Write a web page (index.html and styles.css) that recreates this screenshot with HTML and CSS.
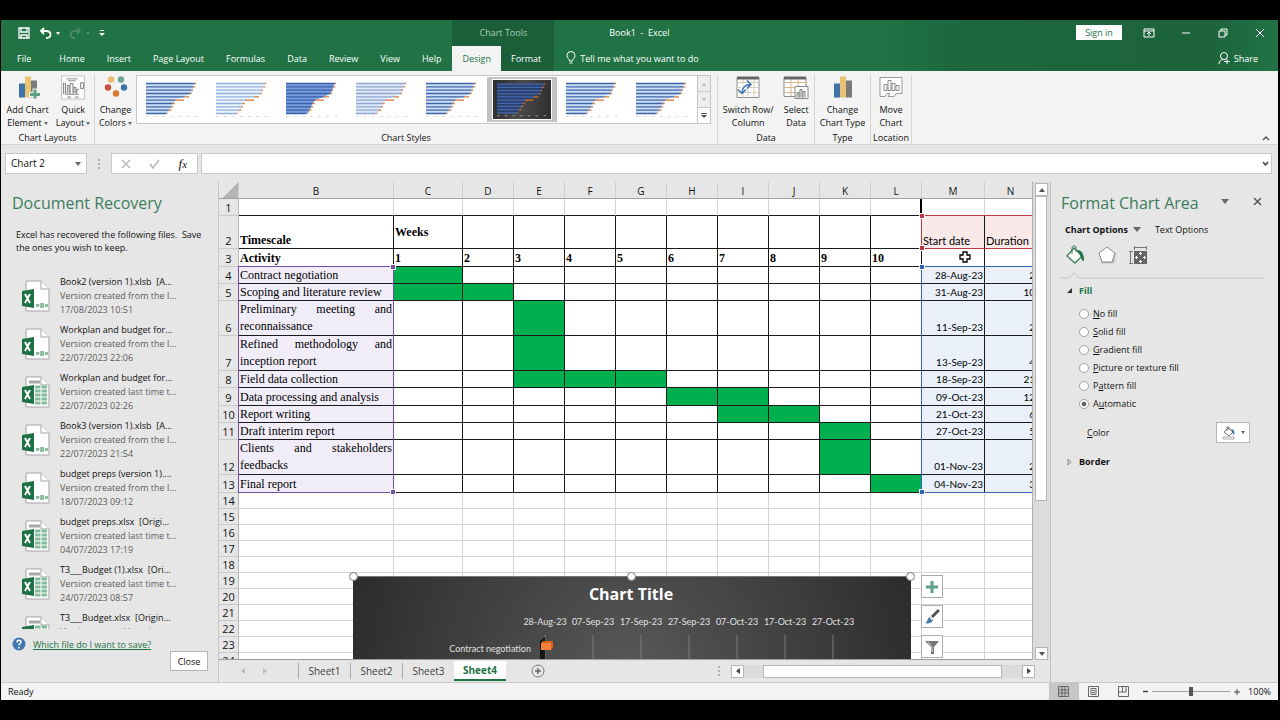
FILE: index.html
```html
<!DOCTYPE html>
<html lang="en">
<head>
    <meta charset="UTF-8">
    <title>Book1 - Excel</title>
    <link rel="stylesheet" href="styles.css">
</head>
<body>
<svg class="defs" aria-hidden="true">
    <symbol id="bars" viewBox="0 0 156 110">
        <path class="gaps" d="M0 6H146L136 36 115 46 90 56 80 66 67 96H0z"/>
        <path class="blue" d="M0 7H146M0 17H142M0 27H136M0 37H132M0 47H115M0 57H87M0 67H80M0 77H75M0 87H67M0 97H61"/>
        <path class="orange" d="M146 7h4M142 17h6M136 27h5M132 37h5M115 47h14M87 57h27M80 67h6M75 77h6M67 87h9M61 97h3"/>
        <path class="axis" d="M0 106h8M24 106h8M48 106h8M72 106h8M96 106h8M120 106h8M146 106h8"/>
    </symbol>
    <symbol id="file-auto" viewBox="0 0 28 32">
        <path d="M4 1h15l8 8v22H4z" fill="#fff" stroke="#a3a3a3"/>
        <path d="M19 1v8h8" fill="#fff" stroke="#a3a3a3"/>
        <path d="M14 25h12" stroke="#9ccab1"/>
        <path d="M14 24h3v3h-3zM18 23h4v5h-4zM23 24h3v3h-3z" fill="#8fc0a5"/>
        <path d="M0 11l12-2v19L0 26z" fill="#1e7145"/>
        <path d="M3 14l5 9M8 14l-5 9" stroke="#fff" stroke-width="2"/>
    </symbol>
    <symbol id="file-sheet" viewBox="0 0 28 32">
        <path d="M4 1h15l8 8v22H4z" fill="#fff" stroke="#a3a3a3"/>
        <path d="M7 6h11" stroke="#a6a6a6" stroke-width="3"/>
        <path d="M13 11h12M13 15h12M13 19h12M13 23h12M13 27h12" stroke="#84bb9c" stroke-width="3"/>
        <path d="M19 9v20" stroke="#fff"/>
        <path d="M19 1v8h8" fill="#fff" stroke="#a3a3a3"/>
        <path d="M0 11l12-2v19L0 26z" fill="#1e7145"/>
        <path d="M3 14l5 9M8 14l-5 9" stroke="#fff" stroke-width="2"/>
    </symbol>
    <symbol id="chart-bars" viewBox="0 0 24 24">
        <path d="M3 8h6v14H3z" fill="#3f74a8"/>
        <path d="M9 1h6v21H9z" fill="#e9c274"/>
        <path d="M15 5h6v17h-6z" fill="#7a7a7a"/>
    </symbol>
</svg>

<div class="window">
    <header class="titlebar">
        <div class="tabs-block">
            <div class="quick-access">
                <button aria-label="Save"><svg width="12" height="12" viewBox="0 0 12 12"><path d="M1 1h10v10H1zM3 1v4h6V1M3 11V8h6v3" fill="none" stroke="#fff" stroke-width="1.3"/></svg></button>
                <button aria-label="Undo"><svg width="21" height="12" viewBox="0 0 21 12"><path d="M5 1L2 4l3 3M2 4h5c6 0 6 7 0 7" fill="none" stroke="#fff" stroke-width="1.8"/><path d="M17 5h4l-2 3z" fill="#fff"/></svg></button>
                <button aria-label="Redo" disabled><svg width="21" height="12" viewBox="0 0 21 12"><path d="M8 1l3 3-3 3M11 4H6c-6 0-6 7 0 7" fill="none" stroke="#4f9068" stroke-width="1.5"/><path d="M17 5h4l-2 3z" fill="#4f9068"/></svg></button>
                <button aria-label="Customize toolbar"><svg width="6" height="8" viewBox="0 0 6 8"><path d="M1 1.5h4" stroke="#fff"/><path d="M0 4h6L3 7z" fill="#fff"/></svg></button>
            </div>
            <nav class="tabs">
                <button class="file">File</button>
                <button>Home</button>
                <button>Insert</button>
                <button>Page Layout</button>
                <button>Formulas</button>
                <button>Data</button>
                <button>Review</button>
                <button>View</button>
                <button>Help</button>
            </nav>
        </div>
        <div class="context-block">
            <div class="context-title">Chart Tools</div>
            <nav class="tabs">
                <button class="active">Design</button>
                <button>Format</button>
            </nav>
        </div>
        <div class="title-block">
            <div class="title-row">
                <span class="book-name">Book1&nbsp; -&nbsp; Excel</span>
                <button class="sign-in">Sign in</button>
                <div class="window-buttons">
                    <button aria-label="Ribbon display options"><svg width="12" height="10" viewBox="0 0 12 10"><path d="M1 1h10v8H1zM1 3h10M6 8V4M4 6l2-2 2 2" fill="none" stroke="#fff"/></svg></button>
                    <button aria-label="Minimize"><svg width="10" height="10" viewBox="0 0 10 10"><path d="M1 5h8" stroke="#fff"/></svg></button>
                    <button aria-label="Restore"><svg width="10" height="10" viewBox="0 0 10 10"><path d="M1 3h6v6H1zM3 3V1h6v6H7" fill="none" stroke="#fff"/></svg></button>
                    <button aria-label="Close window"><svg width="10" height="10" viewBox="0 0 10 10"><path d="M1 1l8 8M9 1L1 9" stroke="#fff"/></svg></button>
                </div>
            </div>
            <div class="tell-row">
                <button class="tell-me"><svg width="10" height="14" viewBox="0 0 10 14"><path d="M3.500 10C3.500 8 1 7 1 4.500a4 4 0 0 1 8 0C9 7 6.500 8 6.500 10zM3.500 12h3" fill="none" stroke="#fff"/></svg>Tell me what you want to do</button>
                <button class="share"><svg width="12" height="12" viewBox="0 0 12 12"><circle cx="6" cy="4" r="3.500" fill="none" stroke="#fff"/><path d="M1 12c0-3 2-4 4-4.500M6 9.500h6M9 7v5" fill="none" stroke="#fff"/></svg>Share</button>
            </div>
        </div>
    </header>

    <section class="ribbon">
        <div class="group layouts">
            <div class="group-items">
                <button class="tool"><svg width="24" height="24" viewBox="0 0 24 24"><use href="#chart-bars"/><path d="M19 13v11M13 19h11" stroke="#f3f3f3" stroke-width="5"/><path d="M19 14v9M14 19h10" stroke="#5fa285" stroke-width="3"/></svg><span>Add Chart<br>Element <i class="caret"></i></span></button>
                <button class="tool"><svg width="26" height="26" viewBox="0 0 26 26"><path d="M1 1h24v24H1z" fill="#fff" stroke="#c0c0c0"/><path d="M6 4h12M8 6h8" stroke="#8a8a8a"/><path d="M3 8v12M5 8v12h14M7 19v-8h2v8M10 19V9h3v10M14 19v-6h2v6M17 19v-4h2M21 8h3v6h-3zM7 23h4M15 23h4" fill="none" stroke="#777"/></svg><span>Quick<br>Layout <i class="caret"></i></span></button>
            </div>
            <div class="group-name">Chart Layouts</div>
        </div>
        <div class="group styles">
            <div class="group-items">
                <button class="tool"><svg width="24" height="24" viewBox="0 0 24 24"><circle cx="7" cy="4" r="3.200" fill="#e9b96e"/><circle cx="17" cy="4" r="3.200" fill="#6aa58c"/><circle cx="4" cy="12" r="3.200" fill="#c8503c"/><circle cx="20" cy="12" r="3.200" fill="#3f74a8"/><circle cx="12" cy="18" r="3.200" fill="#d9792b"/></svg><span>Change<br>Colors <i class="caret"></i></span></button>
                <div class="gallery">
                    <button class="thumb" aria-label="Style 1"><svg><use href="#bars"/></svg></button>
                    <button class="thumb striped" aria-label="Style 2"><svg><use href="#bars"/></svg></button>
                    <button class="thumb thick" aria-label="Style 3"><svg><use href="#bars"/></svg></button>
                    <button class="thumb pale" aria-label="Style 4"><svg><use href="#bars"/></svg></button>
                    <button class="thumb" aria-label="Style 5"><svg><use href="#bars"/></svg></button>
                    <button class="thumb selected" aria-label="Style 6"><svg><use href="#bars"/></svg></button>
                    <button class="thumb" aria-label="Style 7"><svg><use href="#bars"/></svg></button>
                    <button class="thumb" aria-label="Style 8"><svg><use href="#bars"/></svg></button>
                    <div class="gallery-nav">
                        <button aria-label="Previous styles"><svg width="6" height="4"><path d="M1 4h4L3 1z" fill="#bbb"/></svg></button>
                        <button aria-label="Next styles"><svg width="6" height="4"><path d="M1 0h4L3 3z" fill="#bbb"/></svg></button>
                        <button class="more" aria-label="More styles"><svg width="6" height="6"><path d="M0 .5h6" stroke="#555"/><path d="M0 2h6L3 5z" fill="#555"/></svg></button>
                    </div>
                </div>
            </div>
            <div class="group-name">Chart Styles</div>
        </div>
        <div class="group data">
            <div class="group-items">
                <button class="tool"><svg width="24" height="24" viewBox="0 0 24 24"><path d="M1 2h22v20H1z" fill="#fff" stroke="#8c8c8c"/><path d="M1 7h22M1 12h22M1 17h22M7 3v19M12 3v19M18 3v19" stroke="#d6cbb5"/><path d="M1 1h22v3H1z" fill="#666"/><path d="M6 17c0-5 3-8 9-8" stroke="#fff" stroke-width="4" fill="none"/><path d="M6 18c0-6 3-9 9-9M11 5l4 4-4 4M2 14l4 4 4-4" stroke="#3f74b5" stroke-width="1.5" fill="none"/></svg><span>Switch Row/<br>Column</span></button>
                <button class="tool"><svg width="26" height="24" viewBox="0 0 26 24"><path d="M1 2h22v19H1z" fill="#fff" stroke="#8c8c8c"/><path d="M1 7h22M1 12h22M1 17h22M8 3v18M15 3v18" stroke="#d9b48a"/><path d="M1 1h22v3H1z" fill="#666"/><path d="M12 11h13v12H12z" fill="#fff" stroke="#888"/><path d="M14 22v-5h2v5M17 22v-8h2v8M20 22v-6h2v6" fill="none" stroke="#777"/></svg><span>Select<br>Data</span></button>
            </div>
            <div class="group-name">Data</div>
        </div>
        <div class="group type">
            <div class="group-items">
                <button class="tool"><svg width="24" height="24"><use href="#chart-bars"/></svg><span>Change<br>Chart Type</span></button>
            </div>
            <div class="group-name">Type</div>
        </div>
        <div class="group location">
            <div class="group-items">
                <button class="tool"><svg width="24" height="24" viewBox="0 0 24 24"><path d="M1 2h22v16h-6l-2 3H9l2-3H8l-2 3H1z" fill="#fff" stroke="#999"/><path d="M5 15V9h3v6zM9 15V5h3v10zM13 15V8h3v7zM17 15v-5h3v5z" fill="none" stroke="#888"/></svg><span>Move<br>Chart</span></button>
            </div>
            <div class="group-name">Location</div>
        </div>
        <button class="collapse" aria-label="Collapse the ribbon"><svg width="8" height="6" viewBox="0 0 8 6"><path d="M1 5l3-3 3 3" fill="none" stroke="#555" stroke-width="1.5"/></svg></button>
    </section>

    <section class="formula-bar">
        <div class="name-box">
            <input type="text" value="Chart 2" aria-label="Name box">
            <button aria-label="Show names"><i class="caret"></i></button>
        </div>
        <span class="grip"></span>
        <div class="entry-buttons">
            <button aria-label="Cancel"><svg width="10" height="10" viewBox="0 0 10 10"><path d="M1 1l8 8M9 1L1 9" stroke="#b5b5b5" stroke-width="1.3"/></svg></button>
            <button aria-label="Enter"><svg width="11" height="10" viewBox="0 0 11 10"><path d="M1 5l3 4 6-8" fill="none" stroke="#b5b5b5" stroke-width="1.5"/></svg></button>
            <button class="fx" aria-label="Insert function">f<small>x</small></button>
        </div>
        <div class="formula">
            <input type="text" aria-label="Formula">
            <button aria-label="Expand formula bar"><svg width="7" height="5" viewBox="0 0 7 5"><path d="M1 1l2.500 3L6 1" fill="none" stroke="#444" stroke-width="1.5"/></svg></button>
        </div>
    </section>

    <main class="workspace">
        <aside class="recovery">
            <h2>Document Recovery</h2>
            <p>Excel has recovered the following files.&nbsp; Save the ones you wish to keep.</p>
            <ul class="files">
                <li><svg><use href="#file-auto"/></svg><div><b>Book2 (version 1).xlsb&nbsp; [A...</b><span>Version created from the l...</span><span>17/08/2023 10:51</span></div></li>
                <li><svg><use href="#file-auto"/></svg><div><b>Workplan and budget for...</b><span>Version created from the l...</span><span>22/07/2023 22:06</span></div></li>
                <li><svg><use href="#file-sheet"/></svg><div><b>Workplan and budget for...</b><span>Version created last time t...</span><span>22/07/2023 02:26</span></div></li>
                <li><svg><use href="#file-auto"/></svg><div><b>Book3 (version 1).xlsb&nbsp; [A...</b><span>Version created from the l...</span><span>22/07/2023 21:54</span></div></li>
                <li><svg><use href="#file-auto"/></svg><div><b>budget preps (version 1)....</b><span>Version created from the l...</span><span>18/07/2023 09:12</span></div></li>
                <li><svg><use href="#file-sheet"/></svg><div><b>budget preps.xlsx&nbsp; [Origi...</b><span>Version created last time t...</span><span>04/07/2023 17:19</span></div></li>
                <li><svg><use href="#file-sheet"/></svg><div><b>T3___Budget (1).xlsx&nbsp; [Ori...</b><span>Version created last time t...</span><span>24/07/2023 08:57</span></div></li>
                <li><svg><use href="#file-sheet"/></svg><div><b>T3___Budget.xlsx&nbsp; [Origin...</b><span>Version created last time t...</span></div></li>
            </ul>
            <div class="help-line">
                <svg width="14" height="14" viewBox="0 0 14 14"><circle cx="7" cy="7" r="6.500" fill="#3f74b0"/><path d="M5 5.500c0-3 4-3 4-.5C9 6.500 7 6.500 7 8.500M7 10v1.500" fill="none" stroke="#fff" stroke-width="1.5"/></svg>
                <a href="#">Which file do I want to save?</a>
            </div>
            <button class="close-pane">Close</button>
        </aside>

        <section class="book">
            <div class="sheet-row">
                <div class="sheet">
                    <table>
                        <colgroup>
                            <col class="c-num"><col class="c-act"><col class="c-first"><col class="c-week"><col class="c-week"><col class="c-week"><col class="c-week"><col class="c-week"><col class="c-week"><col class="c-week"><col class="c-week"><col class="c-week"><col class="c-date"><col class="c-dur">
                        </colgroup>
                        <thead>
                            <tr><th class="corner"></th><th>B</th><th>C</th><th>D</th><th>E</th><th>F</th><th>G</th><th>H</th><th>I</th><th>J</th><th>K</th><th>L</th><th>M</th><th>N</th></tr>
                        </thead>
                        <tbody class="plan">
                            <tr class="first"><th>1</th><td></td><td></td><td></td><td></td><td></td><td></td><td></td><td></td><td></td><td></td><td class="edge"></td><td></td><td></td></tr>
                            <tr class="scale"><th>2</th><td class="strong">Timescale</td><td class="strong weeks">Weeks</td><td></td><td></td><td></td><td></td><td></td><td></td><td></td><td></td><td></td><td class="head">Start date</td><td class="head">Duration</td></tr>
                            <tr class="odd strong"><th>3</th><td>Activity</td><td>1</td><td>2</td><td>3</td><td>4</td><td>5</td><td>6</td><td>7</td><td>8</td><td>9</td><td>10</td><td></td><td></td></tr>
                            <tr><th>4</th><td class="act">Contract negotiation</td><td class="on"></td><td></td><td></td><td></td><td></td><td></td><td></td><td></td><td></td><td></td><td class="val">28-Aug-23</td><td class="val">2</td></tr>
                            <tr><th>5</th><td class="act">Scoping and literature review</td><td class="on"></td><td class="on"></td><td></td><td></td><td></td><td></td><td></td><td></td><td></td><td></td><td class="val">31-Aug-23</td><td class="val">10</td></tr>
                            <tr class="tall"><th>6</th><td class="act">Preliminary meeting and reconnaissance</td><td></td><td></td><td class="on"></td><td></td><td></td><td></td><td></td><td></td><td></td><td></td><td class="val">11-Sep-23</td><td class="val">2</td></tr>
                            <tr class="tall"><th>7</th><td class="act">Refined methodology and inception report</td><td></td><td></td><td class="on"></td><td></td><td></td><td></td><td></td><td></td><td></td><td></td><td class="val">13-Sep-23</td><td class="val">4</td></tr>
                            <tr><th>8</th><td class="act">Field data collection</td><td></td><td></td><td class="on"></td><td class="on"></td><td class="on"></td><td></td><td></td><td></td><td></td><td></td><td class="val">18-Sep-23</td><td class="val">21</td></tr>
                            <tr class="odd"><th>9</th><td class="act">Data processing and analysis</td><td></td><td></td><td></td><td></td><td></td><td class="on"></td><td class="on"></td><td></td><td></td><td></td><td class="val">09-Oct-23</td><td class="val">12</td></tr>
                            <tr><th>10</th><td class="act">Report writing</td><td></td><td></td><td></td><td></td><td></td><td></td><td class="on"></td><td class="on"></td><td></td><td></td><td class="val">21-Oct-23</td><td class="val">6</td></tr>
                            <tr><th>11</th><td class="act">Draft interim report</td><td></td><td></td><td></td><td></td><td></td><td></td><td></td><td></td><td class="on"></td><td></td><td class="val">27-Oct-23</td><td class="val">5</td></tr>
                            <tr class="tall"><th>12</th><td class="act">Clients and stakeholders feedbacks</td><td></td><td></td><td></td><td></td><td></td><td></td><td></td><td></td><td class="on"></td><td></td><td class="val">01-Nov-23</td><td class="val">2</td></tr>
                            <tr class="odd"><th>13</th><td class="act">Final report</td><td></td><td></td><td></td><td></td><td></td><td></td><td></td><td></td><td></td><td class="on"></td><td class="val">04-Nov-23</td><td class="val">3</td></tr>
                        </tbody>
                        <tbody class="blank">
                            <tr><th>14</th><td></td><td></td><td></td><td></td><td></td><td></td><td></td><td></td><td></td><td></td><td></td><td></td><td></td></tr>
                            <tr><th>15</th><td></td><td></td><td></td><td></td><td></td><td></td><td></td><td></td><td></td><td></td><td></td><td></td><td></td></tr>
                            <tr><th>16</th><td></td><td></td><td></td><td></td><td></td><td></td><td></td><td></td><td></td><td></td><td></td><td></td><td></td></tr>
                            <tr><th>17</th><td></td><td></td><td></td><td></td><td></td><td></td><td></td><td></td><td></td><td></td><td></td><td></td><td></td></tr>
                            <tr><th>18</th><td></td><td></td><td></td><td></td><td></td><td></td><td></td><td></td><td></td><td></td><td></td><td></td><td></td></tr>
                            <tr><th>19</th><td></td><td></td><td></td><td></td><td></td><td></td><td></td><td></td><td></td><td></td><td></td><td></td><td></td></tr>
                            <tr><th>20</th><td></td><td></td><td></td><td></td><td></td><td></td><td></td><td></td><td></td><td></td><td></td><td></td><td></td></tr>
                            <tr><th>21</th><td></td><td></td><td></td><td></td><td></td><td></td><td></td><td></td><td></td><td></td><td></td><td></td><td></td></tr>
                            <tr><th>22</th><td></td><td></td><td></td><td></td><td></td><td></td><td></td><td></td><td></td><td></td><td></td><td></td><td></td></tr>
                            <tr><th>23</th><td></td><td></td><td></td><td></td><td></td><td></td><td></td><td></td><td></td><td></td><td></td><td></td><td></td></tr>
                            <tr><th>24</th><td></td><td></td><td></td><td></td><td></td><td></td><td></td><td></td><td></td><td></td><td></td><td></td><td></td></tr>
                        </tbody>
                    </table>

                    <!-- source ranges of the selected chart -->
                    <div class="range names"><i></i><i></i></div>
                    <div class="range heads"><i></i><i></i></div>
                    <div class="range values"><i></i><i></i></div>
                    <svg class="pointer" viewBox="0 0 12 12"><path d="M4 1h4v3h3v4H8v3H4V8H1V4h3z" fill="#fff" stroke="#000" stroke-width="1.3"/></svg>

                    <div class="chart">
                        <svg width="558" height="100" viewBox="0 0 558 100">
                            <text class="chart-title" x="278" y="23">Chart Title</text>
                            <path d="M192 58v42M240 58v42M288 58v42M336 58v42M384 58v42M432 58v42M480 58v42" stroke="#7d7d7d"/>
                            <g class="axis-text">
                                <text x="192" y="48">28-Aug-23</text>
                                <text x="240" y="48">07-Sep-23</text>
                                <text x="288" y="48">17-Sep-23</text>
                                <text x="336" y="48">27-Sep-23</text>
                                <text x="384" y="48">07-Oct-23</text>
                                <text x="432" y="48">17-Oct-23</text>
                                <text x="480" y="48">27-Oct-23</text>
                            </g>
                            <text class="category" x="178" y="75">Contract negotiation</text>
                            <path d="M187 64l5-4v40h-5z" fill="#151515"/>
                            <path d="M188 66l2-2h10v7l-2 2h-10z" fill="#d9601a"/>
                            <path d="M188 66h10v7h-10z" fill="#f5813a"/>
                            <path d="M206 82h48v2h-50z" fill="#b5561f"/>
                        </svg>
                        <i class="handle start"></i><i class="handle mid"></i><i class="handle end"></i>
                    </div>
                    <div class="chart-buttons">
                        <button aria-label="Chart elements"><svg width="14" height="14" viewBox="0 0 14 14"><path d="M7 1v12M1 7h12" stroke="#5fa285" stroke-width="3"/></svg></button>
                        <button aria-label="Chart styles"><svg width="16" height="16" viewBox="0 0 16 16"><path d="M15 1L8 8" stroke="#555" stroke-width="3"/><path d="M1 14c3-1 2-5 5-6l3 3c-1 3-5 4-8 3z" fill="#4179a8"/><path d="M6 9l2 2" stroke="#fff"/></svg></button>
                        <button aria-label="Chart filters"><svg width="14" height="14" viewBox="0 0 14 14"><path d="M0 1h14L9 7v7H6V7z" fill="#777"/><path d="M3 2l4 5v5" fill="none" stroke="#ddd"/></svg></button>
                    </div>
                </div>
                <div class="vscroll">
                    <button aria-label="Scroll up"><svg width="6" height="4"><path d="M0 4h6L3 0z" fill="#555"/></svg></button>
                    <div class="vthumb"></div>
                    <button class="last" aria-label="Scroll down"><svg width="6" height="4"><path d="M0 0h6L3 4z" fill="#555"/></svg></button>
                </div>
            </div>
            <div class="sheet-tabs">
                <div class="sheet-arrows">
                    <button aria-label="Previous sheet" disabled><svg width="4" height="6"><path d="M4 0v6L0 3z" fill="#bdbdbd"/></svg></button>
                    <button aria-label="Next sheet" disabled><svg width="4" height="6"><path d="M0 0v6l4-3z" fill="#bdbdbd"/></svg></button>
                </div>
                <button class="sheet-tab">Sheet1</button>
                <button class="sheet-tab">Sheet2</button>
                <button class="sheet-tab">Sheet3</button>
                <button class="sheet-tab current">Sheet4</button>
                <button class="add-sheet" aria-label="New sheet"><svg width="14" height="14" viewBox="0 0 14 14"><circle cx="7" cy="7" r="6" fill="none" stroke="#777"/><path d="M7 4v6M4 7h6" stroke="#666" stroke-width="1.5"/></svg></button>
                <span class="grip"></span>
                <div class="hscroll">
                    <button aria-label="Scroll left"><svg width="4" height="6"><path d="M4 0v6L0 3z" fill="#444"/></svg></button>
                    <div class="hthumb"></div>
                    <button aria-label="Scroll right"><svg width="4" height="6"><path d="M0 0v6l4-3z" fill="#444"/></svg></button>
                </div>
            </div>
        </section>

        <aside class="format-pane">
            <div class="pane-head">
                <h2>Format Chart Area</h2>
                <button aria-label="Pane options"><i class="caret big"></i></button>
                <button aria-label="Close pane"><svg width="9" height="9" viewBox="0 0 9 9"><path d="M1 1l7 7M8 1L1 8" stroke="#555" stroke-width="1.5"/></svg></button>
            </div>
            <div class="pane-tabs">
                <button class="on">Chart Options <i class="caret big"></i></button>
                <button>Text Options</button>
            </div>
            <div class="pane-icons">
                <button aria-label="Fill and line"><svg width="20" height="20" viewBox="0 0 20 20"><path d="M9 3l8 8-7 7-8-7z" fill="#fff" stroke="#3d7d5c" stroke-width="1.3"/><path d="M7 9V3c0-3 4-3 4 0v4" fill="none" stroke="#3d7d5c"/><path d="M12 5c5 0 7 4 7 11-2 0-3-2-3-4z" fill="#217346"/></svg></button>
                <button aria-label="Effects"><svg width="20" height="20" viewBox="0 0 20 20"><path d="M4 17h12l2-9" stroke="#c5c5c5" stroke-width="3" fill="none"/><path d="M10 2l8 6-3 9H5L2 8z" fill="#fff" stroke="#888"/></svg></button>
                <button aria-label="Size and properties"><svg width="18" height="18" viewBox="0 0 18 18"><path d="M5 1.500h12M5.500 0v4M17.500 0v4M1.500 5v12M0 5.500h4M0 17.500h4" stroke="#777" fill="none"/><path d="M5 5h13v13H5z" fill="#666"/><path d="M11.500 6v3M11.500 14v3M6 11.500h3M14 11.500h3M10 8l1.500-1.500L13 8M10 15l1.500 1.500L13 15M8 10l-1.500 1.500L8 13M15 10l1.500 1.500L15 13" stroke="#fff" fill="none"/></svg></button>
            </div>
            <svg class="pane-rule" viewBox="0 0 204 8" preserveAspectRatio="xMinYMin slice"><path d="M0 7h8l5-5 5 5h300" fill="none" stroke="#c6c6c6"/></svg>
            <h3 class="fill"><svg width="6" height="6"><path d="M5 0v5H0z" fill="#333"/></svg>Fill</h3>
            <div class="choices">
                <label><input type="radio" name="fill"><span><u>N</u>o fill</span></label>
                <label><input type="radio" name="fill"><span><u>S</u>olid fill</span></label>
                <label><input type="radio" name="fill"><span><u>G</u>radient fill</span></label>
                <label><input type="radio" name="fill"><span><u>P</u>icture or texture fill</span></label>
                <label><input type="radio" name="fill"><span>P<u>a</u>ttern fill</span></label>
                <label><input type="radio" name="fill" checked><span>A<u>u</u>tomatic</span></label>
            </div>
            <div class="color-row">
                <label for="fill-color"><u>C</u>olor</label>
                <button id="fill-color"><svg width="14" height="14" viewBox="0 0 14 14"><path d="M6 2l5 4-4 4-5-4z" fill="#fff" stroke="#777"/><path d="M5 5V1h2v3" fill="none" stroke="#777"/><path d="M9 3c3 0 4 3 3 6l-2-3z" fill="#3f74a8"/><path d="M1 11h11v2H1z" fill="#fff" stroke="#aaa"/></svg><i class="caret"></i></button>
            </div>
            <h3><svg width="6" height="8"><path d="M1 1v6l3-3z" fill="none" stroke="#888"/></svg>Border</h3>
        </aside>
    </main>

    <footer class="status">
        <span class="ready">Ready</span>
        <button class="view active" aria-label="Normal"><svg width="12" height="12" viewBox="0 0 12 12"><path d="M.5.5h10v10H.5zM4 1v10M7 1v10M1 4h10M1 7h10" fill="none" stroke="#666"/></svg></button>
        <button class="view" aria-label="Page layout"><svg width="12" height="12" viewBox="0 0 12 12"><path d="M.5.5h10v10H.5zM3 2.500h5v6H3zM4 4.500h3M4 6.500h3" fill="none" stroke="#666"/></svg></button>
        <button class="view" aria-label="Page break preview"><svg width="12" height="12" viewBox="0 0 12 12"><path d="M.5.5h10v10H.5zM4.500 1v5M8 1v5H1" fill="none" stroke="#666"/></svg></button>
        <div class="zoom">
            <button aria-label="Zoom out"><svg width="5" height="5"><path d="M0 2.500h5" stroke="#444" stroke-width="1.5"/></svg></button>
            <input type="range" min="10" max="190" value="100" aria-label="Zoom">
            <button aria-label="Zoom in"><svg width="6" height="6"><path d="M0 3h6M3 0v6" stroke="#444"/></svg></button>
            <span>100%</span>
        </div>
    </footer>
</div>
</body>
</html>
```
FILE: styles.css
```css
* {
    box-sizing: border-box;
}
body {
    margin: 0;
    height: 100vh;
    padding: 20px 2px 20px 1px;
    background: #000;
    font-family: "Open Sans", "Noto Sans", sans-serif;
    font-size: 9px;
    line-height: 13px;
    color: #111;
    overflow: hidden;
}
button, input {
    font: inherit;
    color: inherit;
    margin: 0;
    padding: 0;
    border: 0;
    border-radius: 0;
    background: none;
    outline: none;
}
button {
    display: flex;
    align-items: center;
    justify-content: center;
    white-space: nowrap;
}
svg {
    display: block;
    flex: none;
}
.defs {
    position: absolute;
    width: 0;
    height: 0;
}
.caret {
    display: inline-block;
    border: 2px solid transparent;
    border-top: 3px solid #666;
    border-bottom: 0;
    vertical-align: middle;
}
.caret.big {
    border-width: 4px;
    border-top-width: 5px;
    border-bottom: 0;
}
.window {
    height: 100%;
    display: flex;
    flex-direction: column;
    background: #e6e6e6;
}

/* title bar and tabs */
.titlebar {
    display: flex;
    flex: none;
    height: 51px;
    background: #217346;
    color: #fff;
}
.tabs-block, .context-block, .title-block {
    display: flex;
    flex-direction: column;
}
.quick-access {
    display: flex;
    align-items: center;
    gap: 9px;
    height: 26px;
    padding-left: 17px;
}
.tabs {
    display: flex;
    height: 26px;
}
.tabs button {
    padding: 0 10px;
}
.tabs-block .tabs {
    padding-left: 5px;
}
.tabs-block .tabs button {
    padding: 0 11px;
}
.tabs .file {
    margin-right: 6px;
}
.context-block {
    background: #1b5f39;
}
.context-block .tabs {
    padding-right: 3px;
}
.context-title {
    height: 26px;
    line-height: 26px;
    text-align: center;
    color: #a9cdb8;
}
.tabs .active {
    background: #f3f3f3;
    color: #217346;
}
.title-block {
    flex: 1;
    background: linear-gradient(90deg, #217346 45%, #1d683e 55%, #1d633b 90%, #217346);
}
.title-row {
    display: flex;
    align-items: center;
    height: 26px;
}
.book-name {
    flex: 1;
    padding-left: 55px;
}
.sign-in {
    width: 46px;
    height: 15px;
    background: #fff;
    color: #217346;
}
.window-buttons {
    display: flex;
    padding-left: 8px;
}
.window-buttons button {
    width: 37px;
}
.tell-row {
    display: flex;
    align-items: center;
    justify-content: space-between;
    height: 26px;
    padding: 0 20px 0 12px;
}
.tell-row button {
    gap: 4px;
}

/* ribbon */
.ribbon {
    display: flex;
    flex: none;
    height: 74px;
    background: #f3f3f3;
    border-bottom: 1px solid #d2d2d2;
}
.group {
    display: flex;
    flex-direction: column;
    margin-top: 4px;
    border-right: 1px solid #d5d5d5;
}
.group-items {
    display: flex;
    flex: 1;
    justify-content: center;
}
.group-name {
    text-align: center;
    line-height: 12px;
}
.layouts {
    width: 94px;
}
.layouts .group-items {
    padding-left: 2px;
}
.styles {
    width: 623px;
}
.data {
    width: 97px;
}
.type {
    width: 56px;
}
.location {
    width: 41px;
}
.tool {
    flex: 1 1 auto;
    flex-direction: column;
    justify-content: flex-start;
    gap: 3px;
}
.tool svg {
    height: 25px;
}
.gallery {
    display: flex;
    flex: none;
    height: 49px;
    margin-right: 6px;
    background: #fff;
    border: 1px solid #c6c6c6;
}
.thumb {
    width: 70px;
    --bar: #3d65a8;
    --gap: #cfe0f6;
}
.thumb svg {
    width: 52px;
    height: 37px;
}
.gaps {
    fill: var(--gap);
}
.blue, .orange, .axis {
    fill: none;
    stroke-width: 4;
}
.blue {
    stroke: var(--bar);
}
.orange {
    stroke: #d9712f;
}
.axis {
    stroke: #c5c5c5;
    stroke-width: 2;
}
.striped {
    --bar: #8fb0e0;
    --gap: #eef4fc;
}
.striped .blue {
    stroke-dasharray: 4 2;
}
.thick {
    --bar: #3560ae;
    --gap: #7c9fdc;
}
.pale {
    --bar: #8ea6d0;
    --gap: #dfe9f8;
}
.thumb.selected {
    margin: 1px 0;
    background: #c3c3c3;
    --bar: #4468b0;
    --gap: #2b3f6b;
}
.selected svg {
    width: 60px;
    height: 41px;
    padding: 2px;
    background: linear-gradient(100deg, #2c2c2c, #4a4a4a, #2c2c2c);
    border: 1px solid #fff;
}
.gallery-nav {
    width: 13px;
    display: flex;
    flex-direction: column;
    border-left: 1px solid #c6c6c6;
}
.gallery-nav button {
    flex: 1;
    background: #ededed;
    border-bottom: 1px solid #c6c6c6;
}
.gallery-nav .more {
    background: #fff;
    border-bottom: 0;
}
.collapse {
    margin: auto 8px 3px auto;
}

/* formula bar */
.formula-bar {
    display: flex;
    flex: none;
    height: 37px;
    padding: 8px 6px 8px 4px;
}
.name-box, .entry-buttons, .formula {
    display: flex;
    background: #fff;
    border: 1px solid #c9c9c9;
}
.name-box {
    width: 82px;
    padding: 0 5px;
    font-size: 10px;
}
.name-box input, .formula input {
    flex: 1;
    min-width: 0;
}
.name-box .caret {
    border-width: 3px;
    border-top-width: 4px;
    border-bottom: 0;
}
.grip {
    width: 2px;
    height: 10px;
    margin: auto 11px;
    border-left: 2px dotted #b0b0b0;
}
.entry-buttons {
    width: 87px;
}
.entry-buttons button {
    flex: 1;
}
.entry-buttons .fx {
    font: italic 13px "Liberation Serif", serif;
}
.formula {
    flex: 1;
    margin-left: 3px;
    padding-right: 2px;
}

.workspace {
    display: flex;
    flex: 1;
    min-height: 0;
}
h2 {
    margin: 0;
    font-size: 16px;
    font-weight: 400;
    line-height: 22px;
    white-space: nowrap;
    color: #3d7d5c;
}

/* document recovery */
.recovery {
    width: 217px;
    flex: none;
    display: flex;
    flex-direction: column;
    padding: 10px 10px 11px 11px;
}
.recovery p {
    margin: 14px 0 21px 4px;
}
.files {
    flex: 1;
    min-height: 0;
    overflow: hidden;
    margin: 0;
    padding: 0 0 0 10px;
    list-style: none;
}
.files li {
    display: flex;
    height: 48px;
    gap: 10px;
}
.files svg {
    width: 28px;
    height: 32px;
    margin-top: 5px;
}
.files b, .files span {
    display: block;
    font-weight: 400;
    line-height: 14px;
}
.files span {
    color: #5c5c5c;
}
.help-line {
    display: flex;
    align-items: flex-end;
    gap: 7px;
    height: 22px;
}
.help-line a {
    color: #217346;
}
.close-pane {
    align-self: flex-end;
    width: 38px;
    height: 20px;
    background: #fff;
    border: 1px solid #b5b5b5;
}

/* grid */
.book {
    flex: 1;
    min-width: 0;
    display: flex;
    flex-direction: column;
    border-left: 1px solid #c6c6c6;
}
.sheet-row {
    flex: 1;
    min-height: 0;
    display: flex;
}
.sheet {
    flex: 1;
    position: relative;
    overflow: hidden;
    background: #fff;
    border-right: 1px solid #b0b0b0;
    border-bottom: 1px solid #9c9c9c;
}
table {
    width: 818px;
    table-layout: fixed;
    border-collapse: separate;
    border-spacing: 0;
}
.c-num {
    width: 20px;
}
.c-act {
    width: 155px;
}
.c-first {
    width: 69px;
}
.c-week {
    width: 51px;
}
.c-date {
    width: 63px;
}
.c-dur {
    width: 52px;
}
th {
    padding: 0;
    font-size: 11px;
    font-weight: 400;
    line-height: 14px;
    vertical-align: bottom;
    background: #e6e6e6;
    border-right: 1px solid #b5b5b5;
    border-bottom: 1px solid #c9c9c9;
}
thead th {
    height: 17px;
    font-size: 10px;
    border-right-color: #cfcfcf;
    border-bottom-color: #a0a0a0;
}
.corner {
    background: linear-gradient(135deg, #e6e6e6 55%, #b5b5b5 55%);
}
td {
    height: 17px;
    padding: 0 1px;
    border-right: 1px solid #d4d4d4;
    border-bottom: 1px solid #d4d4d4;
    vertical-align: bottom;
    font-family: "Liberation Serif", serif;
    font-size: 12px;
    line-height: 16px;
    color: #000;
}
.plan td {
    border-color: #1a1a1a;
}
.plan .first td {
    border-right-color: #d4d4d4;
}
.plan .first .edge {
    border-right: 2px solid #000;
}
.odd td {
    height: 18px;
}
.scale td {
    height: 33px;
}
.tall td {
    height: 35px;
    line-height: 17px;
}
.blank td {
    height: 16px;
}
.strong {
    font-weight: 700;
}
.strong th {
    font-weight: 400;
}
td.weeks {
    vertical-align: middle;
}
td.act {
    background: #f1edf8;
    text-align: justify;
}
td.on {
    background: #00b04f;
}
td.head {
    background: #fae9e9;
    font-family: Lato, sans-serif;
    font-size: 11px;
    line-height: 14px;
}
td.val {
    background: #e9f0fa;
    font-family: Lato, sans-serif;
    font-size: 10px;
    line-height: 15px;
    text-align: right;
}
.range {
    position: absolute;
    border: 1px solid;
}
.range i {
    position: absolute;
    left: -3px;
    top: -3px;
    width: 5px;
    height: 5px;
    background: currentColor;
    border: 1px solid #fff;
    box-sizing: content-box;
    width: 4px;
    height: 4px;
}
.range i + i {
    top: auto;
    bottom: -3px;
}
.names {
    left: 19px;
    top: 84px;
    width: 156px;
    height: 227px;
    color: #6f52a3;
}
.names i {
    left: auto;
    right: -3px;
}
.heads {
    left: 702px;
    top: 33px;
    width: 130px;
    height: 34px;
    color: #c0383f;
}
.values {
    left: 702px;
    top: 84px;
    width: 130px;
    height: 227px;
    color: #3264b4;
}
.pointer {
    position: absolute;
    left: 740px;
    top: 69px;
    width: 12px;
    height: 12px;
}
.chart {
    position: absolute;
    left: 134px;
    top: 394px;
    width: 558px;
    height: 100px;
    background: radial-gradient(circle at 50% 100%, #595959, #2b2b2b 300px);
    border-top: 1px solid #777;
}
.chart text {
    fill: #e0e0e0;
    font-family: Lato, sans-serif;
    font-size: 9px;
}
.chart .chart-title {
    font-family: "Open Sans", sans-serif;
    font-size: 16px;
    font-weight: 700;
    fill: #fff;
    text-anchor: middle;
}
.axis-text {
    text-anchor: middle;
}
.category {
    text-anchor: end;
}
.handle {
    position: absolute;
    top: -5px;
    width: 9px;
    height: 9px;
    background: #fff;
    border: 1px solid #777;
    border-radius: 50%;
}
.start {
    left: -4px;
}
.mid {
    left: 274px;
}
.end {
    right: -4px;
}
.chart-buttons {
    position: absolute;
    left: 702px;
    top: 393px;
    display: flex;
    flex-direction: column;
    gap: 7px;
}
.chart-buttons button {
    width: 22px;
    height: 23px;
    background: #fff;
    border: 1px solid #ababab;
}
.vscroll {
    width: 18px;
    padding: 1px 3px 0 2px;
    display: flex;
    flex-direction: column;
    background: #dcdcdc;
    border-right: 1px solid #c0c0c0;
}
.vscroll button, .hscroll button {
    width: 13px;
    height: 13px;
    background: #fff;
    border: 1px solid #b5b5b5;
}
.vthumb {
    height: 305px;
    background: #fff;
    border: 1px solid #b5b5b5;
}
.vscroll .last {
    margin-top: auto;
}
.sheet-tabs {
    display: flex;
    align-items: center;
    flex: none;
    height: 22px;
    font-size: 10px;
    border-right: 1px solid #c0c0c0;
}
.sheet-arrows {
    display: flex;
    gap: 18px;
    width: 79px;
    padding-left: 22px;
}
.sheet-tab {
    width: 52px;
    height: 16px;
    border-left: 1px solid #ababab;
    color: #444;
}
.sheet-tab.current {
    height: 20px;
    background: #fff;
    border-left: 0;
    border-bottom: 2px solid #217346;
    font-weight: 700;
    color: #217346;
}
.add-sheet {
    margin-left: 25px;
}
.sheet-tabs .grip {
    margin: 0 11px 0 auto;
}
.hscroll {
    display: flex;
    width: 304px;
    margin-right: 15px;
    background: #dcdcdc;
}
.hthumb {
    width: 239px;
    margin: 0 auto 0 19px;
    background: #fff;
    border: 1px solid #b5b5b5;
}

/* format pane */
.format-pane {
    width: 227px;
    flex: none;
    padding: 10px 4px 0 10px;
}
.pane-head {
    display: flex;
    align-items: center;
}
.pane-head h2 {
    flex: 1;
}
.pane-head button {
    width: 33px;
    height: 18px;
    align-self: flex-start;
}
.pane-tabs {
    display: flex;
    gap: 14px;
    margin: 9px 0 0 4px;
}
.pane-tabs .on {
    gap: 5px;
    font-weight: 700;
}
.pane-icons {
    display: flex;
    gap: 12px;
    margin: 9px 0 0 4px;
}
.pane-rule {
    width: 204px;
    height: 8px;
    margin: 6px 0 5px;
}
h3 {
    display: flex;
    align-items: center;
    gap: 6px;
    margin: 0 0 0 6px;
    font-size: 9px;
    line-height: 14px;
}
h3.fill {
    color: #217346;
}
.choices {
    display: flex;
    flex-direction: column;
    gap: 4px;
    margin: 9px 0 0 18px;
    line-height: 14px;
}
.choices label {
    display: flex;
    align-items: center;
    gap: 4px;
}
.choices input {
    appearance: none;
    width: 10px;
    height: 10px;
    background: #fff;
    border: 1px solid #a3a3a3;
    border-radius: 50%;
}
.choices input:checked {
    background: radial-gradient(#666 35%, #fff 50%);
}
.color-row {
    display: flex;
    align-items: center;
    justify-content: space-between;
    margin: 11px 24px 12px 26px;
}
.color-row button {
    width: 34px;
    height: 21px;
    gap: 5px;
    background: #fff;
    border: 1px solid #b5b5b5;
}

/* status bar */
.status {
    display: flex;
    align-items: center;
    flex: none;
    height: 18px;
    background: #f3f3f3;
    border-top: 1px solid #c9c9c9;
}
.ready {
    flex: 1;
    padding-left: 7px;
}
.view {
    width: 30px;
    height: 17px;
}
.view.active {
    background: #c6c6c6;
}
.zoom {
    display: flex;
    align-items: center;
    gap: 4px;
    padding: 0 7px 0 4px;
}
.zoom span {
    padding-left: 4px;
}
.zoom input {
    appearance: none;
    width: 78px;
    height: 11px;
    background: linear-gradient(#a0a0a0, #a0a0a0) center / 100% 1px no-repeat;
}
.zoom input::-webkit-slider-thumb {
    appearance: none;
    width: 4px;
    height: 9px;
    background: #555;
}
```
